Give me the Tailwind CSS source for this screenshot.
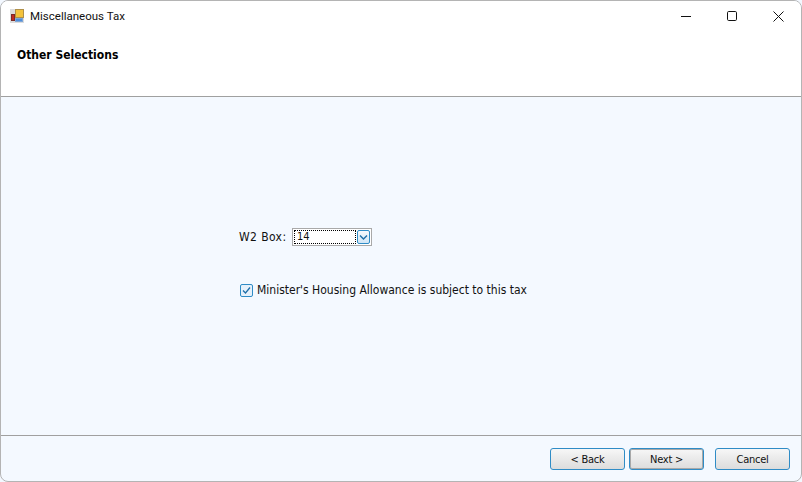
<!DOCTYPE html>
<html lang="en">
  <head>
    <meta charset="UTF-8" />
    <title>Miscellaneous Tax</title>
    <script src="https://cdn.jsdelivr.net/npm/@tailwindcss/browser@4"></script>
  </head>
  <body class="bg-[#f3f8ff]">
    <div class="w-[802px] h-[482px] flex flex-col overflow-hidden bg-[#f4f9ff] border border-[#b4b4b4] rounded-t-[8px] rounded-b-[8px] font-['Roboto',sans-serif] text-[#000]">
      <div class="h-[95px] shrink-0 bg-white flex flex-col">
        <div class="h-[30px] flex items-center justify-between">
          <div class="flex items-center pl-[9px] gap-[6px]">
            <svg width="14" height="14" viewBox="0 0 14 14">
              <rect x="0" y="0" width="14" height="14" fill="#dcdcdc" />
              <rect x="5.5" y="0.5" width="8" height="8" fill="#f4c33c" stroke="#b0904a" />
              <rect x="1.5" y="5.5" width="3" height="6" fill="#c22a22" stroke="#7c2a26" />
              <rect x="5.5" y="9.5" width="7" height="3" fill="#4f8edb" stroke="#7fa6d6" />
            </svg>
            <span class="text-[11.5px] leading-[16px] text-[#111]">Miscellaneous Tax</span>
          </div>
          <div class="flex items-center">
            <div class="w-[46px] h-[30px] flex items-center justify-center">
              <svg width="10" height="10" viewBox="0 0 10 10"><path d="M0 5.5H10" stroke="#111" fill="none" /></svg>
            </div>
            <div class="w-[46px] h-[30px] flex items-center justify-center">
              <svg width="10" height="10" viewBox="0 0 10 10"><rect x="0.5" y="0.5" width="9" height="9" rx="1.2" stroke="#111" fill="none" /></svg>
            </div>
            <div class="w-[46px] h-[30px] flex items-center justify-center">
              <svg width="11" height="11" viewBox="0 0 11 11"><path d="M0.5 0.5L10.5 10.5M10.5 0.5L0.5 10.5" stroke="#111" fill="none" /></svg>
            </div>
          </div>
        </div>
        <div class="pl-[16px] pt-[15px] font-['DejaVu_Sans_Condensed','DejaVu_Sans',sans-serif] font-bold text-[12px] leading-[18px]">Other Selections</div>
      </div>
      <div class="h-px shrink-0 bg-[#a0a0a0]"></div>
      <div class="flex-1 pl-[238px] pt-[131px] font-['DejaVu_Sans_Condensed','DejaVu_Sans',sans-serif] text-[12px] leading-[18px] text-[#111]">
        <div class="flex items-center h-[18px]">
          <span class="w-[53px] tracking-[0.4px]">W2 Box:</span>
          <div class="w-[80px] h-[18px] border border-[#a9a9a9] bg-white flex items-center justify-between p-px">
            <div class="w-[62px] h-[14px] border border-dotted border-black flex items-center pl-[2px] text-[11px] leading-[12px]">14</div>
            <div class="w-[13px] h-[14px] rounded-[2px] border border-[#2f8cc6] bg-gradient-to-b from-[#f6f9fc] to-[#cfe6f7] flex items-center justify-center">
              <svg width="9" height="7" viewBox="0 0 9 7"><path d="M1 1.5L4.5 5L8 1.5" stroke="#1f6fa8" stroke-width="1.4" fill="none" /></svg>
            </div>
          </div>
        </div>
        <div class="flex items-center h-[18px] mt-[35px]">
          <div class="w-[13px] h-[13px] ml-px rounded-[2px] border border-[#2f8cc6] bg-[#e6f1fb] flex items-center justify-center mr-[4px]">
            <svg width="9" height="9" viewBox="0 0 9 9"><path d="M1 4.5L3.5 7L8 1.5" stroke="#1f6fa8" stroke-width="1.3" fill="none" /></svg>
          </div>
          <span>Minister's Housing Allowance is subject to this tax</span>
        </div>
      </div>
      <div class="h-px shrink-0 bg-[#a0a0a0]"></div>
      <div class="h-[45px] shrink-0 flex items-start pt-[12px] pl-[549px] font-['DejaVu_Sans_Condensed','DejaVu_Sans',sans-serif] text-[11px] tracking-[-0.25px] text-[#111]">
        <button class="w-[75px] h-[22px] pt-px rounded-[3px] border border-[#2f8cc6] bg-gradient-to-b from-[#f7f7f7] to-[#dcdcdc] leading-[18px]">&lt; Back</button>
        <button class="w-[75px] h-[22px] pt-px ml-[4px] rounded-[3px] border border-[#2f8cc6] bg-gradient-to-b from-[#f7f7f7] to-[#dcdcdc] shadow-[inset_0_0_0_1px_#a8a8a8] leading-[18px]">Next &gt;</button>
        <button class="w-[75px] h-[22px] pt-px ml-[11px] rounded-[3px] border border-[#2f8cc6] bg-gradient-to-b from-[#f7f7f7] to-[#dcdcdc] leading-[18px]">Cancel</button>
      </div>
    </div>
  </body>
</html>
